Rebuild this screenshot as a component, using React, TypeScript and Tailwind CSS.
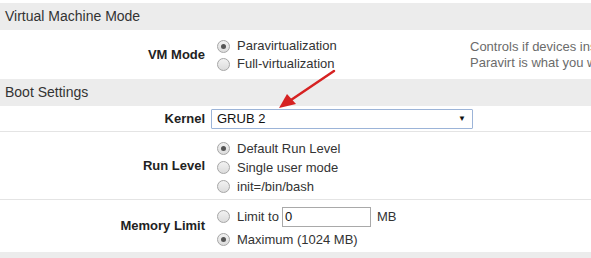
import React from 'react';

const Radio: React.FC<{ checked?: boolean }> = ({ checked }) => (
    <span className="inline-flex items-center justify-center w-[13px] h-[13px] rounded-full border border-[#a6a6a6] bg-gradient-to-b from-[#f2f2f2] to-[#dcdcdc] mr-[7px] shrink-0">
        {checked && <span className="block w-[5px] h-[5px] rounded-full bg-[#555]" />}
    </span>
);

const Option: React.FC<{ checked?: boolean; children: React.ReactNode }> = ({ checked, children }) => (
    <div className="flex items-center h-[18px]">
        <Radio checked={checked} />
        <span>{children}</span>
    </div>
);

const Header: React.FC<{ title: string }> = ({ title }) => (
    <div className="h-[27px] bg-[#ececec] flex items-center pl-[5px] text-[14px] text-[#333]">{title}</div>
);

const Row: React.FC<{ label: string; children: React.ReactNode; className?: string }> = ({ label, children, className }) => (
    <div className={`grid grid-cols-[211px_259px_1fr] border-b border-[#e4e4e4] ${className ?? ''}`}>
        <div className="flex items-center justify-end pr-[6px] font-bold text-[#222]">{label}</div>
        <div className="flex flex-col justify-center pl-[6px]">{children}</div>
        <div />
    </div>
);

export default function App() {
    return (
        <div className="relative w-[591px] h-[258px] overflow-hidden bg-white pt-[3px] text-[13px] text-[#333]" style={{ fontFamily: '"Liberation Sans", Arial, sans-serif' }}>
            <Header title="Virtual Machine Mode" />
            <div className="grid grid-cols-[211px_259px_1fr] h-[49px]">
                <div className="flex items-center justify-end pr-[6px] font-bold text-[#222]">VM Mode</div>
                <div className="flex flex-col justify-center pl-[6px] pt-[1px]">
                    <Option checked>Paravirtualization</Option>
                    <Option>Full-virtualization</Option>
                </div>
                <div className="flex flex-col justify-center text-[#6b6b6b] leading-[16px] whitespace-nowrap overflow-hidden">
                    <span>Controls if devices inside</span>
                    <span>Paravirt is what you want.</span>
                </div>
            </div>
            <Header title="Boot Settings" />
            <Row label="Kernel" className="h-[26px]">
                <div className="-ml-[6px] w-[262px] h-[20px] border border-[#9cb4d8] rounded-[1px] flex items-center justify-between pl-[5px] pr-[6px] text-[#111]">
                    <span>GRUB 2</span>
                    <span className="text-[8px] leading-none">▼</span>
                </div>
            </Row>
            <Row label="Run Level" className="h-[68px]">
                <div className="flex flex-col gap-[1px] pt-[4px]">
                    <Option checked>Default Run Level</Option>
                    <Option>Single user mode</Option>
                    <Option>init=/bin/bash</Option>
                </div>
            </Row>
            <Row label="Memory Limit" className="h-[52px] border-b-0">
                <div className="flex flex-col gap-[4px] pt-[3px]">
                    <div className="flex items-center h-[20px]">
                        <Radio />
                        <span className="mr-[3px]">Limit to</span>
                        <span className="w-[89px] h-[20px] border border-[#a9a9a9] flex items-center pl-[2px] text-[#111]">0</span>
                        <span className="ml-[6px]">MB</span>
                    </div>
                    <Option checked>Maximum (1024 MB)</Option>
                </div>
            </Row>
            <div className="h-[10px] bg-[#ececec]" />

            <svg className="absolute left-0 top-0 pointer-events-none" width="591" height="258" viewBox="0 0 591 258">
                <line x1="334" y1="71" x2="291" y2="100" stroke="#d62222" strokeWidth="2.5" strokeLinecap="round" />
                <polygon points="279,108 287,94 296,104" fill="#d62222" />
            </svg>
        </div>
    );
}
